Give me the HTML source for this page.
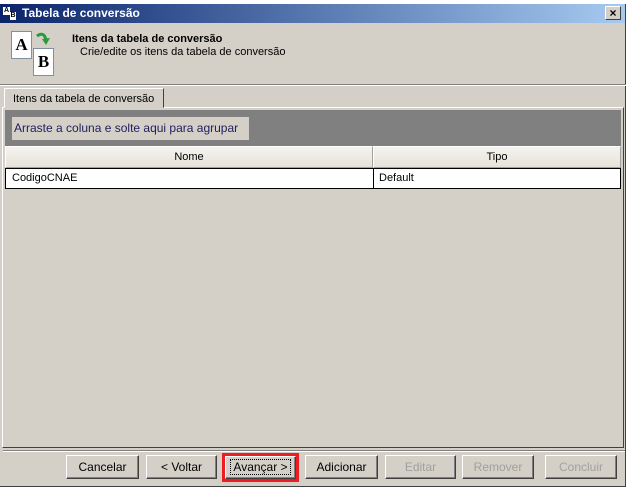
<!DOCTYPE html>
<html><head><style>
*{margin:0;padding:0;box-sizing:border-box}
body{width:632px;height:491px;background:#fff;position:relative;font-family:"Liberation Sans",sans-serif;font-size:11px;overflow:hidden}
.win{position:absolute;left:0;top:4px;width:626px;height:483px;background:#d4d0c8;border-right:1px solid #404040;border-bottom:1px solid #404040}
.title{position:absolute;left:0;top:0;width:625px;height:19px;background:linear-gradient(90deg,#0a246a,#5878b0 50%,#a6caf0);color:#fff;font-weight:bold;font-size:12px;line-height:19px;padding-left:22px}
.close{position:absolute;right:4px;top:2px;width:16px;height:14px;background:#d4d0c8;border:1px solid;border-color:#fff #404040 #404040 #fff;color:#000;font-size:12px;line-height:12px;text-align:center;font-weight:bold}
.abs{position:absolute}
.btn{position:absolute;top:451px;height:24px;background:#d4d0c8;border:1px solid;border-color:#fff #404040 #404040 #fff;box-shadow:inset -1px -1px 0 #808080;text-align:center;line-height:22px;font-size:12px;color:#000}
.dis{color:#a0a0a0}
</style></head><body>
<div class="win">
<div class="title">Tabela de conversão
<div class="abs" style="left:3px;top:3px;width:7px;height:8px;background:#fff;color:#000;font-size:7px;line-height:8px;text-align:center">A</div>
<div class="abs" style="left:10px;top:8px;width:6px;height:8px;background:#fff;color:#000;font-size:7px;line-height:8px;text-align:center">B</div>
<div class="close">×</div></div>
<!-- header icon -->
<div class="abs" style="left:11px;top:27px;width:21px;height:28px;background:#fff;border:1px solid #8090a0;font:bold 17px 'Liberation Serif',serif;text-align:center;line-height:26px">A</div>
<div class="abs" style="left:33px;top:44px;width:21px;height:28px;background:#fff;border:1px solid #8090a0;font:bold 17px 'Liberation Serif',serif;text-align:center;line-height:26px">B</div>
<svg class="abs" style="left:34px;top:26px" width="18" height="18"><path d="M3 6 Q10 1 12 10" stroke="#2a9a3a" stroke-width="3" fill="none"/><path d="M8 9 L12 15 L16 8 Z" fill="#2a9a3a"/></svg>
<div class="abs" style="left:72px;top:29px;font-weight:bold;font-size:11px">Itens da tabela de conversão</div>
<div class="abs" style="left:80px;top:42px;font-size:11px">Crie/edite os itens da tabela de conversão</div>
<div class="abs" style="left:0;top:80px;width:626px;height:2px;border-top:1px solid #808080;border-bottom:1px solid #fff"></div>
<!-- tab -->
<div class="abs" style="left:4px;top:84px;width:160px;height:20px;border:1px solid;border-color:#fff #404040 transparent #fff;background:#d4d0c8;font-size:11px;padding:4px 0 0 8px;z-index:2">Itens da tabela de conversão</div>
<div class="abs" style="left:2px;top:103px;width:622px;height:341px;border:1px solid;border-color:#fff #404040 #404040 #fff"></div>
<div class="abs" style="left:5px;top:106px;width:616px;height:36px;background:#808080"></div>
<div class="abs" style="left:12px;top:113px;width:237px;height:23px;background:#d4d0c8;color:#202060;font-size:12px;line-height:23px;padding-left:2px">Arraste a coluna e solte aqui para agrupar</div>
<div class="abs" style="left:5px;top:142px;width:368px;height:22px;background:linear-gradient(#f4f3ee,#e6e3da);border:1px solid;border-color:#fff #a0a0a0 #a0a0a0 #fff;text-align:center;line-height:20px;font-size:11px">Nome</div>
<div class="abs" style="left:373px;top:142px;width:248px;height:22px;background:linear-gradient(#f4f3ee,#e6e3da);border:1px solid;border-color:#fff #a0a0a0 #a0a0a0 #fff;text-align:center;line-height:20px;font-size:11px">Tipo</div>
<div class="abs" style="left:5px;top:164px;width:616px;height:21px;background:#fff;border:1px solid #000"></div>
<div class="abs" style="left:373px;top:165px;width:1px;height:19px;background:#000"></div>
<div class="abs" style="left:12px;top:168px;font-size:11px">CodigoCNAE</div>
<div class="abs" style="left:379px;top:168px;font-size:11px">Default</div>
<div class="abs" style="left:3px;top:446px;width:622px;height:2px;border-top:1px solid #808080;border-bottom:1px solid #fff"></div>
<div class="btn" style="left:66px;width:73px">Cancelar</div>
<div class="btn" style="left:146px;width:71px">&lt; Voltar</div>
<div class="abs" style="left:222px;top:449px;width:77px;height:29px;border:3px solid #ee1c24"></div>
<div class="btn" style="left:225px;top:452px;width:71px;height:23px;line-height:21px"><span style="outline:1px dotted #000;padding:0 2px">Avançar &gt;</span></div>
<div class="btn" style="left:305px;width:73px">Adicionar</div>
<div class="btn dis" style="left:385px;width:71px">Editar</div>
<div class="btn dis" style="left:462px;width:72px">Remover</div>
<div class="btn dis" style="left:545px;width:72px">Concluir</div>
</div>
</body></html>
